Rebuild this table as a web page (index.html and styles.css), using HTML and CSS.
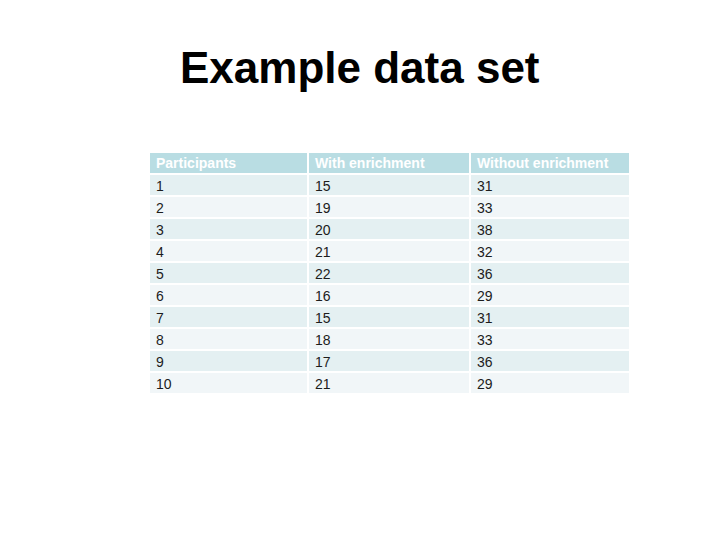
FILE: index.html
```html
<!DOCTYPE html>
<html>
<head>
<meta charset="utf-8">
<link rel="stylesheet" href="styles.css">
</head>
<body>
<h1 class="title">Example data set</h1>
<table class="data">
  <thead>
    <tr><th>Participants</th><th>With enrichment</th><th>Without enrichment</th></tr>
  </thead>
  <tbody>
    <tr><td>1</td><td>15</td><td>31</td></tr>
    <tr><td>2</td><td>19</td><td>33</td></tr>
    <tr><td>3</td><td>20</td><td>38</td></tr>
    <tr><td>4</td><td>21</td><td>32</td></tr>
    <tr><td>5</td><td>22</td><td>36</td></tr>
    <tr><td>6</td><td>16</td><td>29</td></tr>
    <tr><td>7</td><td>15</td><td>31</td></tr>
    <tr><td>8</td><td>18</td><td>33</td></tr>
    <tr><td>9</td><td>17</td><td>36</td></tr>
    <tr><td>10</td><td>21</td><td>29</td></tr>
  </tbody>
</table>
</body>
</html>
```
FILE: styles.css
```css
html, body {
  margin: 0;
  padding: 0;
  background: #ffffff;
}
body {
  width: 720px;
  height: 540px;
  font-family: "Liberation Sans", Arial, sans-serif;
}
.title {
  margin: 46px 0 0 180px;
  font-size: 44px;
  line-height: 44px;
  font-weight: bold;
  color: #000;
}
.data {
  margin: 61px 0 0 148px;
  border-collapse: separate;
  border-spacing: 2px;
  font-size: 14px;
}
.data th, .data td {
  height: 20px;
  padding: 0 0 0 6px;
  text-align: left;
  vertical-align: middle;
  line-height: 20px;
}
.data th {
  background: #b9dde3;
  color: #ffffff;
  font-weight: bold;
}
.data th:nth-child(1), .data td:nth-child(1) { width: 151px; }
.data th:nth-child(2), .data td:nth-child(2) { width: 154px; }
.data th:nth-child(3), .data td:nth-child(3) { width: 152px; }
.data td {
  color: #1c1c1c;
  height: 18px;
  line-height: 18px;
  padding-top: 2px;
}
.data tbody tr:nth-child(odd) td { background: #e4f0f2; }
.data tbody tr:nth-child(even) td { background: #f1f6f8; }
```
